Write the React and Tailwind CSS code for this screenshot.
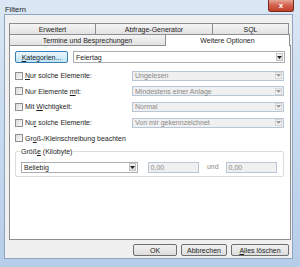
import React from "react";

const font = { fontFamily: '"Liberation Sans", Arial, sans-serif' };

const U = ({ children }) => <span className="underline underline-offset-1">{children}</span>;

const Arrow = ({ dim }) => (
  <svg width="5" height="3" viewBox="0 0 5 3">
    <path d="M0 0h5L2.5 3z" fill={dim ? "#9a9a9a" : "#222"} />
  </svg>
);

const Check = () => (
  <span className="w-[8px] h-[8px] border border-[#8f8f8f] bg-gradient-to-br from-[#dcdcdc] to-[#fafafa] shrink-0" />
);

const DisabledCombo = ({ text }) => (
  <div className="w-[152px] h-[10px] border border-[#b9c6d8] bg-[#f0f0f0] flex items-center justify-between pl-[2px] pr-[1px]">
    <span className="text-[#8a8a8a] leading-none">{text}</span>
    <span className="w-[7px] h-[7px] flex items-center justify-center border border-[#d6d6d6] bg-[#f4f4f4]">
      <Arrow dim />
    </span>
  </div>
);

const Row = ({ label, combo }) => (
  <div className="flex items-center justify-between h-[15.6px]">
    <div className="flex items-center gap-[2px]">
      <Check />
      <span className="text-[#1e1e1e] leading-none">{label}</span>
    </div>
    {combo && <DisabledCombo text={combo} />}
  </div>
);

const Btn = ({ children, w }) => (
  <div className={`${w} h-[12px] rounded-[2px] border border-[#707070] bg-gradient-to-b from-[#f2f2f2] to-[#dcdcdc] flex items-center justify-center text-[#1e1e1e] leading-none`}>
    {children}
  </div>
);

const Tab = ({ children, w }) => (
  <div className={`${w} h-[11px] border border-[#8c8e94] border-b-0 -ml-px first:ml-0 bg-gradient-to-b from-[#f5f5f5] to-[#e2e2e2] flex items-center justify-center text-[#1e1e1e] leading-none`}>
    {children}
  </div>
);

export default function App() {
  return (
    <div
      style={font}
      className="w-[300px] h-[267px] text-[7px] flex flex-col bg-gradient-to-b from-[#dbe7f4] via-[#c6d9ee] to-[#b6cde9] overflow-hidden"
    >
      {/* title bar */}
      <div className="h-[14px] flex items-start justify-between pl-[5px] pr-[6px]">
        <span className="mt-[6px] text-[#1b1b1b] text-[7.5px] leading-none">Filtern</span>
        <div className="w-[26px] h-[12px] rounded-b-[3px] border border-t-0 border-[#7a2b20] bg-gradient-to-b from-[#e8a493] via-[#d1614c] to-[#c33d27] flex items-center justify-center">
          <span className="text-white font-bold text-[8px] leading-none">x</span>
        </div>
      </div>

      {/* client */}
      <div className="flex-1 ml-[4px] mr-[7px] mb-[8px] border border-[#8fa5c0] bg-[#f0f0f0] flex flex-col pt-[8px] pl-[4px] pr-[2px]">
        {/* tabs */}
        <div className="flex">
          <Tab w="w-[87px]">Erweitert</Tab>
          <Tab w="w-[118px]">Abfrage-Generator</Tab>
          <Tab w="w-[77px]">SQL</Tab>
        </div>
        <div className="flex items-end">
          <Tab w="w-[157px]">Termine und Besprechungen</Tab>
          <div className="w-[125px] h-[12px] -ml-px border border-[#8c8e94] border-b-0 bg-white flex items-center justify-center text-[#1e1e1e] leading-none relative z-10 -mb-px">
            Weitere Optionen
          </div>
        </div>

        {/* panel */}
        <div className="h-[195px] w-[282px] border border-[#8c8e94] bg-white px-[5px] pt-[5px]">
          <div className="flex items-center gap-[5px]">
            <div className="w-[53px] h-[12px] rounded-[2px] border border-[#3c7fb1] bg-gradient-to-b from-[#eaf6fd] to-[#bee4f8] flex items-center justify-center text-[#1e1e1e] leading-none">
              <U>K</U>ategorien...
            </div>
            <div className="flex-1 h-[12px] border border-[#abadb3] flex items-center justify-between pl-[2px] pr-[1px]">
              <span className="text-[#1e1e1e] leading-none">Feiertag</span>
              <span className="w-[7px] h-[8px] flex items-center justify-center border border-[#c4c4c4] bg-gradient-to-b from-[#f4f4f4] to-[#dcdcdc]">
                <Arrow />
              </span>
            </div>
          </div>

          <div className="mt-[5px] flex flex-col pr-[1px]">
            <Row label={<><U>N</U>ur solche Elemente:</>} combo="Ungelesen" />
            <Row label={<>Nur Elemente <U>m</U>it:</>} combo="Mindestens einer Anlage" />
            <Row label={<>Mit <U>W</U>ichtigkeit:</>} combo="Normal" />
            <Row label={<>Nu<U>r</U> solche Elemente:</>} combo="Von mir gekennzeichnet" />
            <Row label={<>Gr<U>o</U>ß-/Kleinschreibung beachten</>} />
          </div>

          <div className="mt-[5px] relative border border-[#dcdcdc] rounded-[2px] h-[26px] mr-[1px] flex items-end pb-[3px] pl-[5px] pr-[6px]">
            <span className="absolute -top-[4px] left-[4px] bg-white px-[1px] text-[#1e1e1e] leading-none">
              Größ<U>e</U> (Kilobyte)
            </span>
            <div className="w-[118px] h-[11px] border border-[#abadb3] flex items-center justify-between pl-[2px] pr-[1px]">
              <span className="text-[#1e1e1e] leading-none">Beliebig</span>
              <span className="w-[7px] h-[8px] flex items-center justify-center border border-[#c4c4c4] bg-gradient-to-b from-[#f4f4f4] to-[#dcdcdc]">
                <Arrow />
              </span>
            </div>
            <div className="ml-[10px] w-[52px] h-[11px] border border-[#b9c6d8] bg-[#f0f0f0] flex items-center pl-[2px] text-[#8a8a8a] leading-none">
              0,00
            </div>
            <span className="ml-[8px] mr-[7px] self-center mt-[8px] text-[#8a8a8a] leading-none">und</span>
            <div className="w-[52px] h-[11px] border border-[#b9c6d8] bg-[#f0f0f0] flex items-center pl-[2px] text-[#8a8a8a] leading-none">
              0,00
            </div>
          </div>
        </div>

        {/* buttons */}
        <div className="mt-[4px] flex justify-end gap-[4px] pr-[1px]">
          <Btn w="w-[44px]">OK</Btn>
          <Btn w="w-[46px]">Abbrechen</Btn>
          <Btn w="w-[58px]">
            <span><U>A</U>lles löschen</span>
          </Btn>
        </div>
      </div>
    </div>
  );
}
